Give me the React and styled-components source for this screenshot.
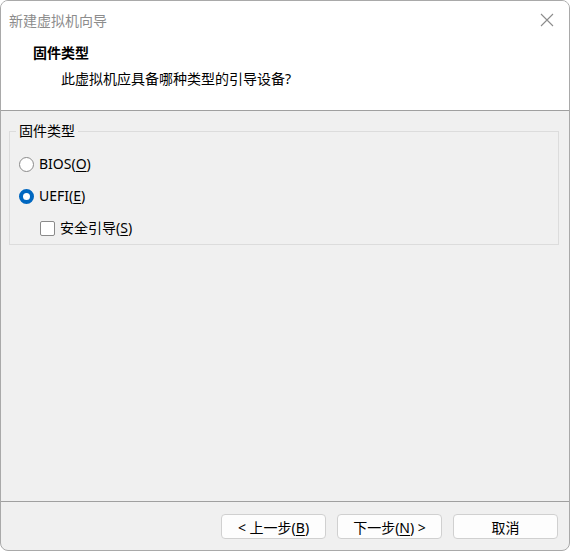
import React, { useState } from 'react'
import styled, { createGlobalStyle } from 'styled-components'

const GlobalStyle = createGlobalStyle`
  html, body {
    margin: 0;
    padding: 0;
    background: #ffffff;
  }
  * { box-sizing: border-box; }
`

const font = `"Segoe UI", "Noto Sans", "Noto Sans CJK SC", sans-serif`

const Window = styled.div`
  width: 570px;
  height: 551px;
  display: flex;
  flex-direction: column;
  border: 1px solid #a9a9a9;
  border-radius: 8px;
  overflow: hidden;
  background: #f0f0f0;
  font-family: ${font};
  font-size: 14px;
  color: #000;
`

const TitleBar = styled.div`
  height: 38px;
  display: flex;
  align-items: center;
  justify-content: space-between;
  padding: 0 12px 0 8px;
  background: #fff;
  color: #8c8c8c;
  font-size: 14px;
`

const CloseButton = styled.button`
  width: 20px;
  height: 20px;
  padding: 0;
  border: none;
  background: none;
  display: flex;
  align-items: center;
  justify-content: center;
  color: #8c8c8c;
`

const Header = styled.div`
  height: 72px;
  background: #fff;
  border-bottom: 1px solid #a0a0a0;
  padding: 4px 0 0 32px;
  display: flex;
  flex-direction: column;
  gap: 6px;
`

const HeaderTitle = styled.div`
  font-weight: bold;
  line-height: 20px;
`

const HeaderSub = styled.div`
  padding-left: 28px;
  line-height: 20px;
`

const Body = styled.div`
  flex: 1;
  padding: 20px 10px 0 8px;
`

const Group = styled.div`
  position: relative;
  height: 114px;
  border: 1px solid #dcdcdc;
  padding: 16px 0 0 9px;
  display: flex;
  flex-direction: column;
`

const GroupLabel = styled.span`
  position: absolute;
  top: -11px;
  left: 6px;
  padding: 0 3px;
  background: #f0f0f0;
  line-height: 20px;
`

const Option = styled.label`
  display: flex;
  align-items: center;
  gap: 5px;
  height: 32px;
  padding-left: ${p => p.indent || 0}px;
  line-height: 20px;
`

const Radio = styled.span`
  width: 15px;
  height: 15px;
  border-radius: 50%;
  border: ${p => (p.checked ? '4.5px solid #0067c0' : '1px solid #8a8a8a')};
  background: #fff;
  flex: none;
`

const Check = styled.span`
  width: 15px;
  height: 15px;
  border: 1px solid #8a8a8a;
  border-radius: 2px;
  background: #fff;
  flex: none;
`

const Key = styled.u`
  text-decoration: underline;
  text-underline-offset: 2px;
`

const Footer = styled.div`
  height: 49px;
  border-top: 1px solid #a0a0a0;
  display: flex;
  align-items: center;
  justify-content: flex-end;
  gap: 11px;
  padding: 0 11px 0 0;
`

const Button = styled.button`
  width: 105px;
  height: 25px;
  border: 1px solid #d0d0d0;
  border-radius: 4px;
  background: #fdfdfd;
  font-family: ${font};
  font-size: 14px;
  color: #000;
  padding: 0;
  margin-top: 1px;
`

const App = () => {
  const [mode, setMode] = useState('uefi')
  return (
    <>
      <GlobalStyle />
      <Window>
        <TitleBar>
          <span>新建虚拟机向导</span>
          <CloseButton aria-label="关闭">
            <svg width="14" height="14" viewBox="0 0 14 14">
              <path d="M1 1 L13 13 M13 1 L1 13" stroke="currentColor" strokeWidth="1.1" />
            </svg>
          </CloseButton>
        </TitleBar>
        <Header>
          <HeaderTitle>固件类型</HeaderTitle>
          <HeaderSub>此虚拟机应具备哪种类型的引导设备?</HeaderSub>
        </Header>
        <Body>
          <Group>
            <GroupLabel>固件类型</GroupLabel>
            <Option onClick={() => setMode('bios')}>
              <Radio checked={mode === 'bios'} />
              <span>BIOS(<Key>O</Key>)</span>
            </Option>
            <Option onClick={() => setMode('uefi')}>
              <Radio checked={mode === 'uefi'} />
              <span>UEFI(<Key>E</Key>)</span>
            </Option>
            <Option indent={21}>
              <Check />
              <span>安全引导(<Key>S</Key>)</span>
            </Option>
          </Group>
        </Body>
        <Footer>
          <Button>&lt; 上一步(<Key>B</Key>)</Button>
          <Button>下一步(<Key>N</Key>) &gt;</Button>
          <Button>取消</Button>
        </Footer>
      </Window>
    </>
  )
}

export default App
